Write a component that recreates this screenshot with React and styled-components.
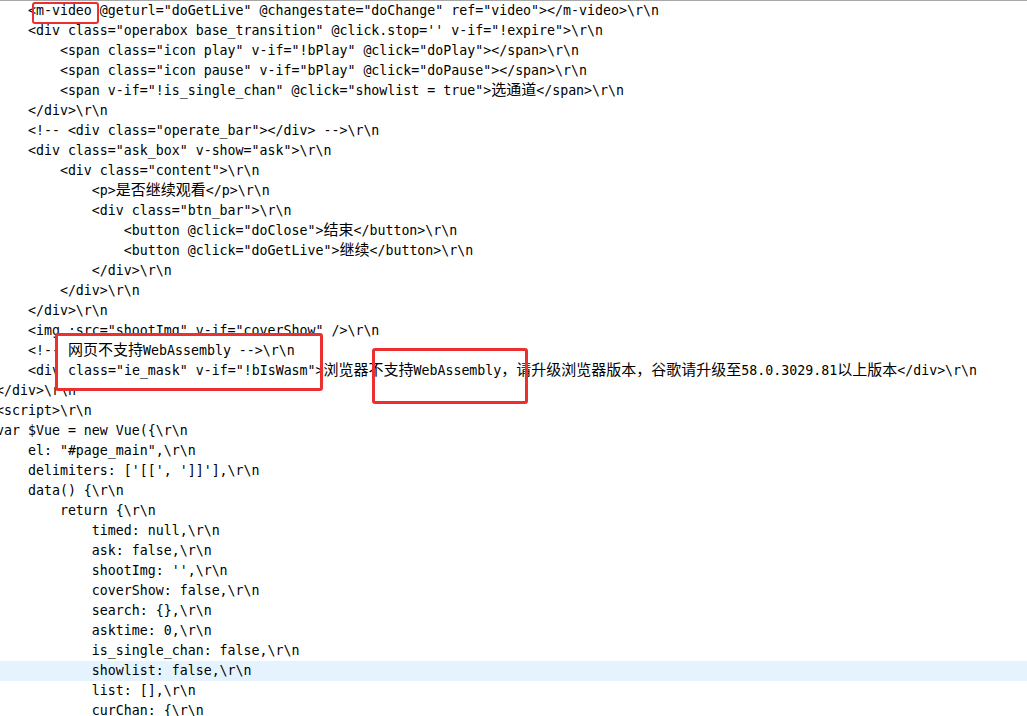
import styled, { createGlobalStyle } from "styled-components"

const lines = [
  `    <m-video @geturl="doGetLive" @changestate="doChange" ref="video"></m-video>\\r\\n`,
  `    <div class="operabox base_transition" @click.stop='' v-if="!expire">\\r\\n`,
  `        <span class="icon play" v-if="!bPlay" @click="doPlay"></span>\\r\\n`,
  `        <span class="icon pause" v-if="bPlay" @click="doPause"></span>\\r\\n`,
  `        <span v-if="!is_single_chan" @click="showlist = true">选通道</span>\\r\\n`,
  `    </div>\\r\\n`,
  `    <!-- <div class="operate_bar"></div> -->\\r\\n`,
  `    <div class="ask_box" v-show="ask">\\r\\n`,
  `        <div class="content">\\r\\n`,
  `            <p>是否继续观看</p>\\r\\n`,
  `            <div class="btn_bar">\\r\\n`,
  `                <button @click="doClose">结束</button>\\r\\n`,
  `                <button @click="doGetLive">继续</button>\\r\\n`,
  `            </div>\\r\\n`,
  `        </div>\\r\\n`,
  `    </div>\\r\\n`,
  `    <img :src="shootImg" v-if="coverShow" />\\r\\n`,
  `    <!-- 网页不支持WebAssembly -->\\r\\n`,
  `    <div class="ie_mask" v-if="!bIsWasm">浏览器不支持WebAssembly，请升级浏览器版本，谷歌请升级至58.0.3029.81以上版本</div>\\r\\n`,
  `</div>\\r\\n`,
  `<script>\\r\\n`,
  `var $Vue = new Vue({\\r\\n`,
  `    el: "#page_main",\\r\\n`,
  `    delimiters: ['[[', ']]'],\\r\\n`,
  `    data() {\\r\\n`,
  `        return {\\r\\n`,
  `            timed: null,\\r\\n`,
  `            ask: false,\\r\\n`,
  `            shootImg: '',\\r\\n`,
  `            coverShow: false,\\r\\n`,
  `            search: {},\\r\\n`,
  `            asktime: 0,\\r\\n`,
  `            is_single_chan: false,\\r\\n`,
  `            showlist: false,\\r\\n`,
  `            list: [],\\r\\n`,
  `            curChan: {\\r\\n`,
]

// CJK runs get their own (wider) font so the columns line up like the editor's
const CJK = /([\u3000-\u9fff\uff00-\uffef]+)/

function CodeText({ text }) {
  return text.split(CJK).map((part, i) =>
    CJK.test(part) ? <Wide key={i}>{part}</Wide> : part
  )
}

export default function App() {
  return (
    <>
      <GlobalStyle />
      <Editor>
        <Lines>
          {lines.map((line, i) => (
            <Line key={i} $active={i === 33}>
              <CodeText text={line} />
            </Line>
          ))}
        </Lines>

        <Mark $x={32} $y={2} $w={67} $h={22} $border={2} />
        <Mark $x={55} $y={333} $w={268} $h={58} $border={3} $fill>
          <BoxText>
            <Line><CodeText text={`网页不支持WebAssembly -->\\r\\n`} /></Line>
            <Line><CodeText text={`class="ie_mask" v-if="!bIsWasm">`} /></Line>
          </BoxText>
        </Mark>
        <Mark $x={372} $y={348} $w={156} $h={56} $border={3} />
      </Editor>
    </>
  )
}

const GlobalStyle = createGlobalStyle`
  html, body {
    margin: 0;
    padding: 0;
    background: #fff;
  }
  body {
    width: 1027px;
    height: 716px;
    overflow: hidden;
  }
`
const Editor = styled.div`
  position: relative;
  width: 1027px;
  height: 716px;
  overflow: hidden;
  border-top: 1px solid #a7a7a7;
  box-sizing: border-box;
  background: #fff;
  font-family: "DejaVu Sans Mono", "Liberation Mono", monospace;
  font-size: 13.28px;
  color: #000;
`
const Lines = styled.div`
  margin-left: -4px;
  width: 1040px;
`
const Line = styled.div`
  height: 20px;
  line-height: 20px;
  white-space: pre;
  background: ${(p) => (p.$active ? "#e5f3ff" : "transparent")};
  margin-left: ${(p) => (p.$active ? "-10px" : "0")};
  padding-left: ${(p) => (p.$active ? "10px" : "0")};
`
const Wide = styled.span`
  font-family: "Noto Sans CJK SC", sans-serif;
  font-size: 15px;
  line-height: 0;
`
const Mark = styled.div`
  position: absolute;
  left: ${(p) => p.$x}px;
  top: ${(p) => p.$y - 1}px;
  width: ${(p) => p.$w}px;
  height: ${(p) => p.$h}px;
  box-sizing: border-box;
  border: ${(p) => p.$border}px solid #ec2f2f;
  border-radius: 3px;
  background: ${(p) => (p.$fill ? "#fff" : "transparent")};
  overflow: hidden;
`
const BoxText = styled.div`
  padding: 5px 0 0 10px;
`
